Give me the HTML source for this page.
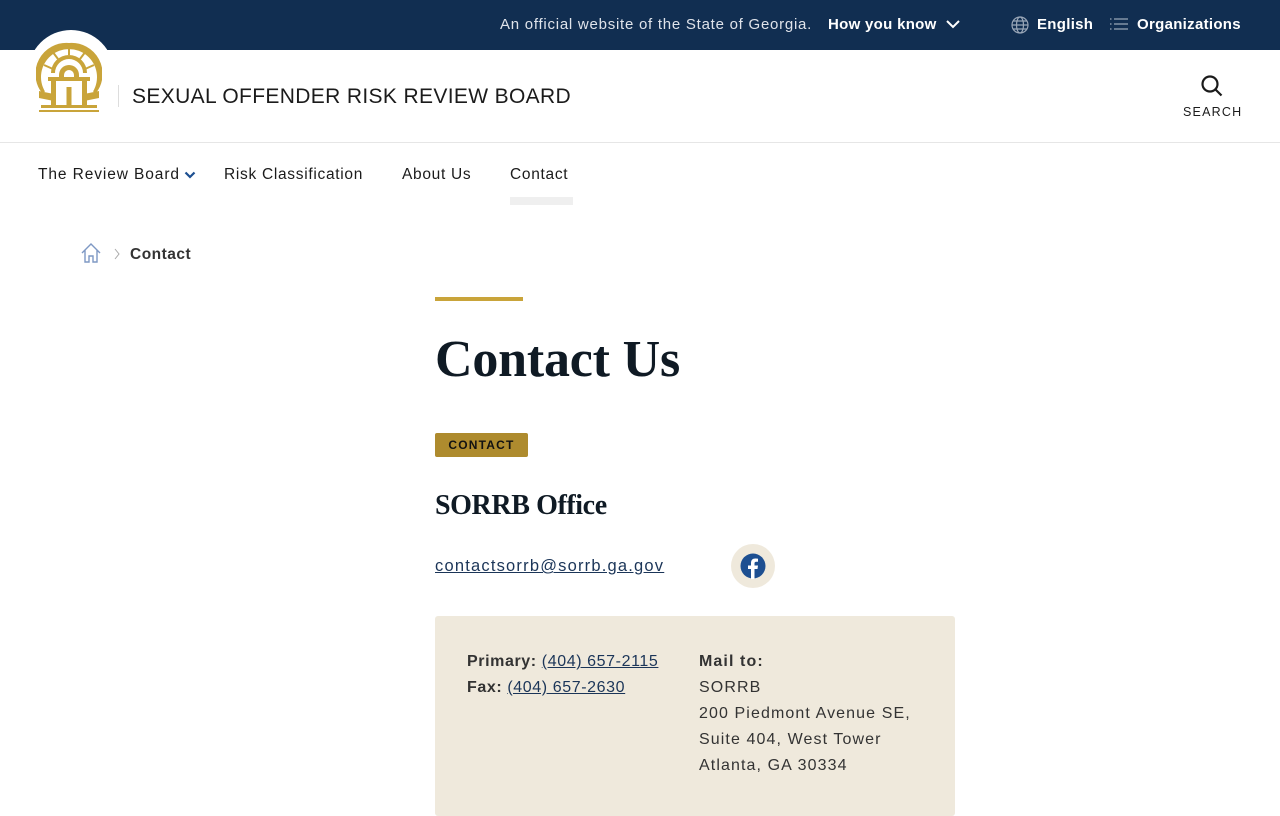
<!DOCTYPE html>
<html><head><meta charset="utf-8"><style>
*{margin:0;padding:0;box-sizing:border-box}
body{width:1280px;height:800px;overflow:hidden;background:#fff;font-family:"Liberation Sans",sans-serif;color:#1b1b1b;position:relative}
.top{position:absolute;left:0;top:0;width:1280px;height:50px;background:#112e51;color:#fff;font-size:15px}
.top span{position:absolute;top:16px;white-space:nowrap}
.hdr{position:absolute;top:50px;left:0;width:1280px;height:93px;border-bottom:1px solid #e6e6e6}
.seal{position:absolute;left:28px;top:30px;width:86px;height:86px;border-radius:50%;background:#fff}
.a{position:absolute;white-space:nowrap}
.nav{font-size:15.5px;color:#1b1b1b;top:166px;letter-spacing:.7px}
</style></head><body>
<div class="top">
<span style="left:500px;color:#dfe3ea;letter-spacing:.75px">An official website of the State of Georgia.</span>
<span style="left:828px;font-weight:bold;letter-spacing:.3px">How you know</span>
<svg style="position:absolute;left:946px;top:19px" width="14" height="10"><path d="M1 2l6 6 6-6" stroke="#fff" stroke-width="2" fill="none"/></svg>
<svg style="position:absolute;left:1011px;top:16px" width="18" height="18" fill="none" stroke="#9aa7b8" stroke-width="1.2"><circle cx="9" cy="9" r="8"/><ellipse cx="9" cy="9" rx="3.5" ry="8"/><path d="M1 9h16M2.5 5h13M2.5 13h13"/></svg>
<span style="left:1037px;font-weight:bold;letter-spacing:.3px">English</span>
<svg style="position:absolute;left:1109px;top:17px" width="20" height="15" stroke="#9aa7b8" stroke-width="1.3"><path d="M5 2h14M5 7h14M5 12h14M1 2h1.5M1 7h1.5M1 12h1.5"/></svg>
<span style="left:1137px;font-weight:bold;letter-spacing:.3px">Organizations</span>
</div>
<div class="seal"></div>
<svg style="position:absolute;left:36px;top:41px" width="66" height="74" viewBox="0 0 66 74" fill="#c9a43a">
<path d="M33 2A31 31 0 0 0 6 52l3-1.5A28 28 0 1 1 57 50.5l3 1.5A31 31 0 0 0 33 2z"/>
<g stroke="#c9a43a" stroke-width="2"><path d="M33 4v10M16 10l6 8M50 10l-6 8M8 24l9 4M58 24l-9 4"/></g>
<path d="M33 14a18 18 0 0 0-18 18h4a14 14 0 0 1 28 0h4a18 18 0 0 0-18-18z"/>
<path d="M33 24a10 10 0 0 0-10 10v3h5v-3a5 5 0 0 1 10 0v3h5v-3a10 10 0 0 0-10-10z"/>
<rect x="12" y="36" width="42" height="4"/><rect x="15" y="40" width="5" height="24"/><rect x="30.5" y="46" width="5" height="18"/><rect x="46" y="40" width="5" height="24"/>
<path d="M3 50l15 3v7L3 57zM63 50l-15 3v7l15-3z"/>
<rect x="5" y="64" width="56" height="3"/><rect x="3" y="69" width="60" height="2"/>
</svg>
<div class="hdr">
<div style="position:absolute;left:118px;top:35px;width:1px;height:22px;background:#ddd"></div>
<div class="a" style="left:132px;top:35px;font-size:21px;color:#1b1b1b;letter-spacing:.35px">SEXUAL OFFENDER RISK REVIEW BOARD</div>
<svg style="position:absolute;left:1200px;top:24px" width="24" height="24" fill="none" stroke="#1b1b1b" stroke-width="2.2"><circle cx="10" cy="10" r="7.5"/><path d="M15.5 15.5l6 6"/></svg>
<div class="a" style="left:1183px;top:55px;font-size:12.5px;letter-spacing:1.2px">SEARCH</div>
</div>
<div class="a nav" style="left:38px;letter-spacing:.9px">The Review Board</div>
<svg style="position:absolute;left:184px;top:171px" width="12" height="9"><path d="M1.5 1.5l4.5 4.5 4.5-4.5" stroke="#1d4f91" stroke-width="2.2" fill="none"/></svg>
<div class="a nav" style="left:224px">Risk Classification</div>
<div class="a nav" style="left:402px">About Us</div>
<div class="a nav" style="left:510px">Contact</div>
<div style="position:absolute;left:510px;top:197px;width:63px;height:8px;background:#efefef"></div>
<svg style="position:absolute;left:80px;top:242px" width="22" height="22" fill="none" stroke="#7e98c4" stroke-width="1.4"><path d="M2 11L11 2l9 9M5 8v12h4v-6h4v6h4V8"/></svg>
<svg style="position:absolute;left:113px;top:248px" width="8" height="12"><path d="M2 1l4 5-4 5" stroke="#aaa" fill="none"/></svg>
<div class="a" style="left:130px;top:246px;font-size:15.5px;font-weight:bold;color:#333;letter-spacing:.5px">Contact</div>
<div style="position:absolute;left:435px;top:297px;width:88px;height:4px;background:#c9a43a"></div>
<div class="a" style="left:435px;top:330px;font-family:'Liberation Serif',serif;font-weight:bold;font-size:52px;color:#0f1a24;letter-spacing:-.2px">Contact Us</div>
<div style="position:absolute;left:435px;top:433px;width:93px;height:24px;background:#ae8b2e;border-radius:2px;font-size:12px;font-weight:bold;letter-spacing:1.2px;text-align:center;line-height:24px;color:#111">CONTACT</div>
<div class="a" style="left:435px;top:490px;font-family:'Liberation Serif',serif;font-weight:bold;font-size:28px;color:#0f1a24;letter-spacing:-.4px">SORRB Office</div>
<div class="a" style="left:435px;top:557px;font-size:16.5px;color:#1b3558;text-decoration:underline;letter-spacing:1.2px">contactsorrb@sorrb.ga.gov</div>
<div style="position:absolute;left:731px;top:544px;width:44px;height:44px;border-radius:50%;background:#efe9dc"></div>
<svg style="position:absolute;left:740px;top:553px" width="26" height="26" viewBox="0 0 26 26"><circle cx="13" cy="13" r="12.5" fill="#1d4f91"/><path d="M14.5 26V16h3l.5-3.5h-3.5v-2c0-1 .4-1.7 1.8-1.7H18V5.7c-.4 0-1.5-.2-2.7-.2-2.7 0-4.3 1.6-4.3 4.5v2.5H8V16h3v10z" fill="#fff"/></svg>
<div style="position:absolute;left:435px;top:616px;width:520px;height:200px;background:#efe9dc;border-radius:3px"></div>
<div class="a" style="left:467px;top:649px;font-size:16px;line-height:26px;color:#333;letter-spacing:.6px"><b>Primary:</b> <u style="color:#1b3558">(404) 657-2115</u><br><b>Fax:</b> <u style="color:#1b3558">(404) 657-2630</u></div>
<div class="a" style="left:699px;top:649px;font-size:16px;line-height:26px;color:#333;letter-spacing:1.1px"><b>Mail to:</b><br>SORRB<br>200 Piedmont Avenue SE,<br>Suite 404, West Tower<br>Atlanta, GA 30334</div>
</body></html>
